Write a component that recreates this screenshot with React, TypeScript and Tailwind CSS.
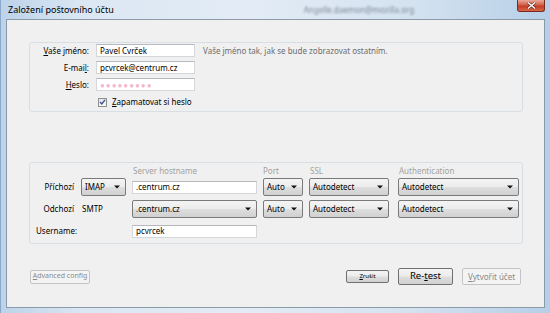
import type { ReactNode } from 'react';
import clsx from 'clsx';

const btnBg = 'bg-[linear-gradient(#f4f4f4,#ececec_48%,#dedede_52%,#d0d0d0)]';
const cols = 'grid grid-cols-[45px_45px_125px_40px_83px_121px] gap-x-[6px] items-center';

function Arrow() {
  return (
    <svg width="6" height="4" viewBox="0 0 6 4" className="shrink-0">
      <path d="M0 0.5 L6 0.5 L3 3.5 Z" fill="#111" />
    </svg>
  );
}

function Select({ value, className }: { value: string; className?: string }) {
  return (
    <div
      className={clsx(
        'flex h-[18px] items-center justify-between rounded-[2px] border border-[#7a7a7a] pl-[3px] pr-[5px] text-[8px] text-black',
        btnBg,
        className,
      )}
    >
      <span>{value}</span>
      <Arrow />
    </div>
  );
}

function Input({ children, className }: { children?: ReactNode; className?: string }) {
  return (
    <div
      className={clsx(
        'flex h-[13px] items-center border border-[#d3d7dc] border-t-[#b5b8bd] bg-white px-[3px] text-[8px] text-black',
        className,
      )}
    >
      {children}
    </div>
  );
}

function Button({ children, disabled, className }: { children: ReactNode; disabled?: boolean; className?: string }) {
  return (
    <div
      className={clsx(
        'flex items-center justify-center rounded-[2px] border',
        disabled ? 'border-[#c2c5c8] bg-[#f4f4f4] text-[#8a8a8a]' : clsx('border-[#707070] text-black', btnBg),
        className,
      )}
    >
      {children}
    </div>
  );
}

export default function App() {
  return (
    <div className="relative h-[313px] w-[550px] overflow-hidden border-l border-[#8aa8c8] bg-[linear-gradient(90deg,#bcd3ea,#dbe7f3_15%,#e3ecf6_45%,#d4e2f0_75%,#b6cfe8)] font-['Noto_Sans',sans-serif]">
      {/* title bar */}
      <div className="flex h-[19px] items-center pl-[7px]">
        <span className="text-[9px] text-black">Založení poštovního účtu</span>
        <span className="ml-[190px] text-[8px] text-[#55606b] opacity-70 blur-[1.2px]">Angelle.daemon@mozilla.org</span>
      </div>
      <div className="absolute right-[5px] top-0 flex h-[12px] w-[28px] items-center justify-center rounded-b-[3px] border border-t-0 border-[#7a2a1e] bg-[linear-gradient(#e9a89a,#d2614a_45%,#c23d25_55%,#d7664a)]">
        <svg width="9" height="7" viewBox="0 0 9 7">
          <path d="M1 0.5 L8 6.5 M8 0.5 L1 6.5" stroke="#5b1a10" strokeWidth="2.6" />
          <path d="M1 0.5 L8 6.5 M8 0.5 L1 6.5" stroke="#fff" strokeWidth="1.5" />
        </svg>
      </div>

      {/* client area */}
      <div className="mx-[5px] flex h-[289px] flex-col border border-[#8c9aa8] bg-[#f0f0f0]">
        {/* identity box */}
        <div className="ml-[22px] mr-[21px] mt-[22px] h-[70px] rounded-[3px] border border-[#d8dfe4] pt-[1px]">
          <div className="grid grid-cols-[59px_99px_1fr] grid-rows-[13px_13px_13px] items-center gap-x-[7px] gap-y-[4px] text-[8px]">
            <span className="text-right"><u>V</u>aše jméno:</span>
            <Input>Pavel Cvrček</Input>
            <span className="ml-[1px] text-[#6e6e6e]">Vaše jméno tak, jak se bude zobrazovat ostatním.</span>
            <span className="text-right">E-mai<u>l</u>:</span>
            <Input>pcvrcek@centrum.cz</Input>
            <span />
            <span className="text-right"><u>H</u>eslo:</span>
            <Input>
              <span className="tracking-[1px] text-[#f3b9cf] blur-[0.6px]">●●●●●●●●●</span>
            </Input>
          </div>
          <div className="ml-[68px] mt-[5px] flex items-center gap-[5px] text-[8px]">
            <div className="flex h-[9px] w-[9px] items-center justify-center border border-[#8e8f8f] bg-[linear-gradient(#e6e6e6,#fafafa)]">
              <svg width="7" height="6" viewBox="0 0 7 6">
                <path d="M1 3 L2.8 5 L6 0.8" stroke="#3a4f8f" strokeWidth="1.3" fill="none" />
              </svg>
            </div>
            <span><u>Z</u>apamatovat si heslo</span>
          </div>
        </div>

        {/* server box */}
        <div className="ml-[22px] mr-[21px] mt-[50px] h-[82px] rounded-[3px] border border-[#d8dfe4] text-[8px]">
          <div className={clsx(cols, 'h-[15px] text-[#a2a2a2]')}>
            <span />
            <span />
            <span className="pl-[1px]">Server hostname</span>
            <span>Port</span>
            <span className="pl-[1px]">SSL</span>
            <span className="pl-[1px]">Authentication</span>
          </div>
          <div className={clsx(cols, 'h-[18px]')}>
            <span className="pr-[1px] text-right">Příchozí</span>
            <Select value="IMAP" />
            <Input>.centrum.cz</Input>
            <Select value="Auto" />
            <Select value="Autodetect" className="w-[80px]" />
            <Select value="Autodetect" />
          </div>
          <div className={clsx(cols, 'mt-[4px] h-[18px]')}>
            <span className="pr-[1px] text-right">Odchozí</span>
            <span className="pl-[1px]">SMTP</span>
            <Select value=".centrum.cz" />
            <Select value="Auto" />
            <Select value="Autodetect" className="w-[80px]" />
            <Select value="Autodetect" />
          </div>
          <div className={clsx(cols, 'mt-[6px] h-[14px]')}>
            <span className="col-span-2 pl-[6px]">Username:</span>
            <Input>pcvrcek</Input>
          </div>
        </div>

        {/* buttons */}
        <div className="mx-[23px] mt-[24px] flex h-[17px] items-center">
          <Button disabled className="h-[14px] w-[60px] text-[7px]">
            <span><u>A</u>dvanced config</span>
          </Button>
          <div className="flex-1" />
          <Button className="h-[13px] w-[43px] text-[6px]">
            <span><u>Z</u>rušit</span>
          </Button>
          <Button className="ml-[9px] h-[17px] w-[55px] text-[9.5px]">
            <span>Re-<u>t</u>est</span>
          </Button>
          <Button disabled className="ml-[9px] h-[17px] w-[59px] text-[8px]">
            <span><u>V</u>ytvořit účet</span>
          </Button>
        </div>
      </div>
    </div>
  );
}
